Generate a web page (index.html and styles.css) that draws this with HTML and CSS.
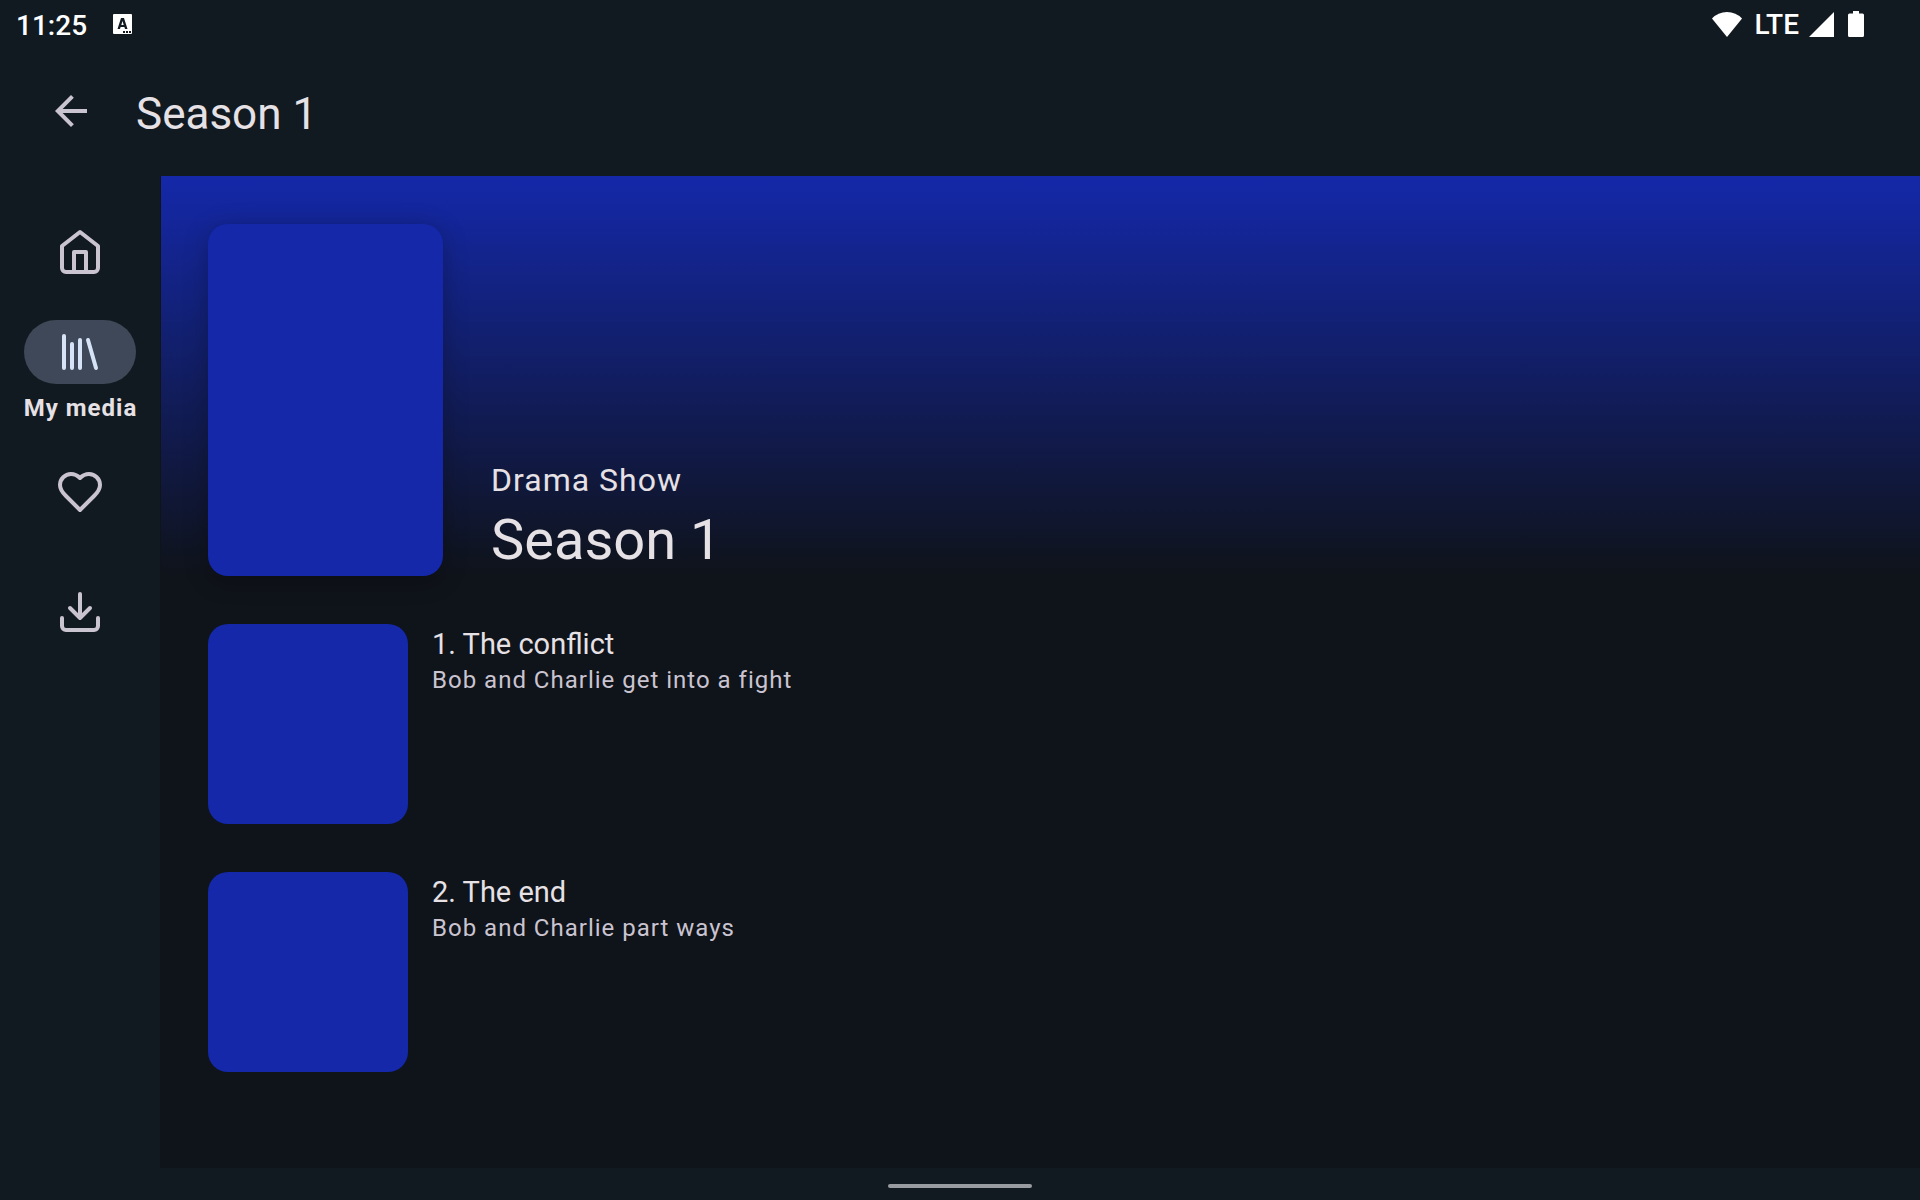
FILE: index.html
```html
<!DOCTYPE html>
<html lang="en">
<head>
<meta charset="utf-8">
<meta name="viewport" content="width=device-width, initial-scale=1">
<title>Season 1</title>
<link rel="stylesheet" href="styles.css">
</head>
<body>
<div class="status-bar">
  <time class="clock">11:25</time>
  <svg class="status-app" width="20" height="20" viewBox="0 0 20 20" aria-hidden="true">
    <path fill="#fff" fill-rule="evenodd" d="M1 0h17a1 1 0 0 1 1 1v18a1 1 0 0 1-1 1H1a1 1 0 0 1-1-1V1a1 1 0 0 1 1-1zM8 4 4.500 15h2.500l.6-2h3.800l.6 2h2.500L11 4zM9.500 7l1.200 4H8.300zM10 17v2h2v-2zM13 17v2h2v-2zM16 17v2h2v-2z"/>
  </svg>
  <div class="status-icons">
    <svg width="30" height="25" viewBox="0 0 30 25" aria-hidden="true"><path fill="#fff" d="M15 25 0 6.500Q6 0 15 0t15 6.500z"/></svg>
    <span class="network">LTE</span>
    <svg width="25" height="25" viewBox="0 0 25 25" aria-hidden="true"><path fill="#fff" d="M25 0v25H0z"/></svg>
    <svg class="battery" width="16" height="26" viewBox="0 0 16 26" aria-hidden="true"><path fill="#fff" d="M5 0h6v2.500h3.500A1.500 1.500 0 0 1 16 4v20.500a1.500 1.500 0 0 1-1.500 1.500h-13A1.500 1.500 0 0 1 0 24.500V4a1.500 1.500 0 0 1 1.500-1.500H5z"/></svg>
  </div>
</div>
<header class="app-bar">
  <button class="back" type="button" aria-label="Back">
    <svg width="48" height="48" viewBox="0 0 24 24" aria-hidden="true"><path fill="currentColor" d="M20 11H7.830l5.590-5.590L12 4l-8 8 8 8 1.410-1.410L7.830 13H20v-2z"/></svg>
  </button>
  <h1 class="app-title">Season 1</h1>
</header>
<div class="body">
  <nav class="rail" aria-label="Main">
    <a class="rail-item" href="#home" aria-label="Home">
      <svg class="icon" viewBox="0 0 24 24" aria-hidden="true"><path d="m3 9 9-7 9 7v11a2 2 0 0 1-2 2H5a2 2 0 0 1-2-2z"/><path d="M9 22V12h6v10"/></svg>
    </a>
    <a class="rail-item selected" href="#media" aria-current="page">
      <span class="indicator"><svg class="icon" viewBox="0 0 24 24" aria-hidden="true"><path d="m16 6 4 14M12 6v14M8 8v12M4 4v16"/></svg></span>
      <span class="rail-label">My media</span>
    </a>
    <a class="rail-item" href="#favorites" aria-label="Favorites">
      <svg class="icon" viewBox="0 0 24 24" aria-hidden="true"><path d="M19 14c1.490-1.460 3-3.210 3-5.500A5.500 5.500 0 0 0 16.500 3c-1.760 0-3 .5-4.500 2-1.500-1.500-2.740-2-4.500-2A5.500 5.500 0 0 0 2 8.500c0 2.300 1.500 4.050 3 5.500l7 7z"/></svg>
    </a>
    <a class="rail-item" href="#downloads" aria-label="Downloads">
      <svg class="icon" viewBox="0 0 24 24" aria-hidden="true"><path d="M21 15v4a2 2 0 0 1-2 2H5a2 2 0 0 1-2-2v-4M7 10l5 5 5-5M12 15V3"/></svg>
    </a>
  </nav>
  <main class="content">
    <section class="hero">
      <div class="poster"></div>
      <div class="hero-text">
        <p class="show">Drama Show</p>
        <h2 class="season">Season 1</h2>
      </div>
    </section>
    <ul class="episodes">
      <li class="episode">
        <div class="thumb"></div>
        <div class="episode-text">
          <h3 class="episode-title">1. The conflict</h3>
          <p class="episode-summary">Bob and Charlie get into a fight</p>
        </div>
      </li>
      <li class="episode">
        <div class="thumb"></div>
        <div class="episode-text">
          <h3 class="episode-title">2. The end</h3>
          <p class="episode-summary">Bob and Charlie part ways</p>
        </div>
      </li>
    </ul>
  </main>
</div>
<footer class="gesture-bar"><div class="handle"></div></footer>
</body>
</html>
```
FILE: styles.css
```css
:root {
  --bar: #121a21;
  --surface: #0f131a;
  --art: #1428a9;
  --text: #e6e1e5;
  --muted: #cac4d0;
}

* { box-sizing: border-box; }

body {
  margin: 0;
  min-height: 100vh;
  display: flex;
  flex-direction: column;
  background: var(--bar);
  color: var(--text);
  font-family: Roboto, sans-serif;
}

h1, h2, h3, p, ul { margin: 0; padding: 0; font-weight: 400; }

svg { display: block; }

.status-bar {
  display: flex;
  align-items: center;
  height: 48px;
  padding: 0 56px 0 16px;
  color: #fff;
  font-size: 28px;
  font-weight: 500;
  line-height: 32px;
}

.clock { padding-top: 4px; }
.status-app { margin-left: 26px; }

.status-icons {
  display: flex;
  align-items: center;
  gap: 8px;
  margin-left: auto;
}

.network { padding: 2px 2px 0 4px; }
.battery { margin-left: 6px; }

.app-bar {
  display: flex;
  align-items: center;
  height: 128px;
  padding: 0 8px 0 24px;
}

.back {
  display: grid;
  place-items: center;
  width: 94px;
  height: 94px;
  margin: 0 2px 2px 0;
  padding: 0;
  border: 0;
  background: none;
  color: var(--muted);
}

.app-title {
  padding: 4px 0 0 16px;
  font-size: 44px;
  line-height: 56px;
}

.body { flex: 1; display: flex; }

.rail {
  flex: none;
  width: 160px;
  padding-top: 16px;
}

.rail-item {
  display: flex;
  flex-direction: column;
  align-items: center;
  justify-content: center;
  gap: 8px;
  height: 120px;
  color: var(--muted);
  text-decoration: none;
}

.icon {
  width: 48px;
  height: 48px;
  fill: none;
  stroke: currentColor;
  stroke-width: 2;
  stroke-linecap: round;
  stroke-linejoin: round;
}

.indicator {
  display: grid;
  place-items: center;
  width: 112px;
  height: 64px;
  border-radius: 32px;
  background: #3e4858;
  color: #d6e3f7;
}

.rail-label {
  padding-left: 1px;
  color: var(--text);
  font-size: 24px;
  font-weight: 700;
  line-height: 32px;
  letter-spacing: 1px;
}

.content {
  flex: 1;
  background: var(--surface);
}

.hero {
  display: flex;
  align-items: flex-end;
  gap: 48px;
  margin-left: 1px;
  padding: 48px 48px 0 47px;
  background: linear-gradient(var(--art), var(--surface));
}

.poster {
  width: 235px;
  height: 352px;
  border-radius: 20px;
  background: var(--art);
  box-shadow: 0 4px 24px rgba(0, 0, 0, 0.25);
}

.show {
  font-size: 32px;
  line-height: 48px;
  letter-spacing: 1px;
}

.season { font-size: 56px; line-height: 72px; }

.episodes {
  display: flex;
  flex-direction: column;
  gap: 48px;
  padding: 48px;
  list-style: none;
}

.episode { display: flex; gap: 24px; }

.thumb {
  width: 200px;
  height: 200px;
  border-radius: 20px;
  background: var(--art);
}

.episode-title { font-size: 29px; line-height: 40px; }

.episode-summary {
  color: var(--muted);
  font-size: 24px;
  line-height: 32px;
  letter-spacing: 1px;
}

.gesture-bar {
  display: grid;
  justify-content: center;
  height: 32px;
  padding-top: 16px;
}

.handle {
  width: 144px;
  height: 4px;
  border-radius: 2px;
  background: #989b9f;
}
```
